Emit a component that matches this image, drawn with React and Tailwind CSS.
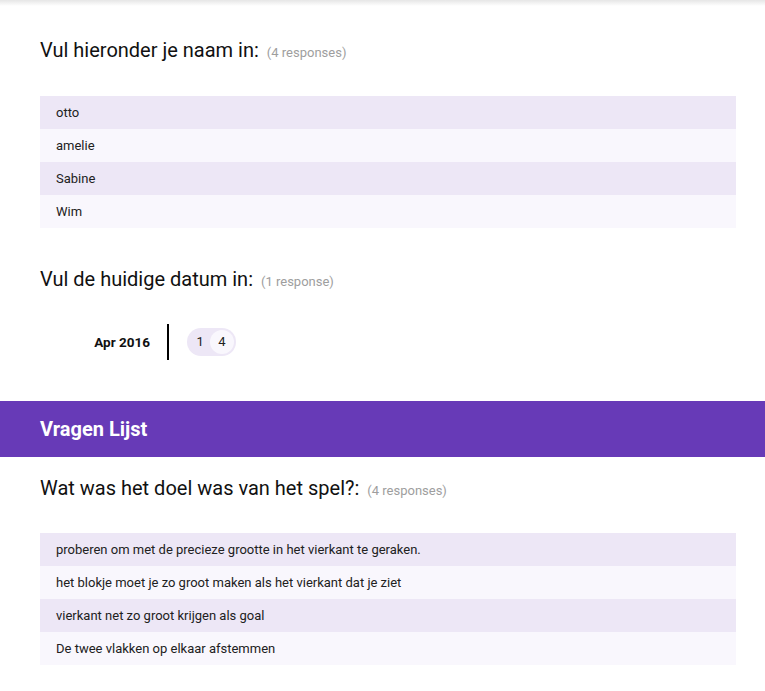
import React from "react";

const font = { fontFamily: "Roboto, 'Noto Sans', Arial, sans-serif" };

function Heading({ title, count, className = "" }) {
  return (
    <div className={"flex items-baseline gap-[8px] " + className}>
      <span className="text-[20px] leading-[28px] text-[#111111]">{title}</span>
      <span className="text-[13px] text-[#9e9e9e]">{count}</span>
    </div>
  );
}

function Rows({ items }) {
  return (
    <div className="flex flex-col">
      {items.map((t, i) => (
        <div
          key={i}
          className={
            "h-[33px] flex items-center pl-[16px] text-[13px] text-[#212121] " +
            (i % 2 === 0 ? "bg-[#ede7f6]" : "bg-[#f9f7fd]")
          }
        >
          {t}
        </div>
      ))}
    </div>
  );
}

export default function App() {
  return (
    <div className="w-[765px] h-[691px] bg-white overflow-hidden" style={font}>
      <div className="h-[6px] bg-gradient-to-b from-[#e6e6e6] to-white" />
      <div className="px-[40px] pr-[29px]">
        <Heading title="Vul hieronder je naam in:" count="(4 responses)" className="pt-[30px]" />
        <div className="mt-[32px]">
          <Rows items={["otto", "amelie", "Sabine", "Wim"]} />
        </div>
        <Heading title="Vul de huidige datum in:" count="(1 response)" className="mt-[37px]" />
        <div className="mt-[31px] flex items-center">
          <div className="w-[110px] text-right text-[13.5px] font-bold text-[#111111]">Apr 2016</div>
          <div className="ml-[17px] w-[1.5px] h-[36px] bg-black" />
          <div className="ml-[18px] h-[28px] rounded-full bg-[#ede7f6] flex items-center pl-[10px] pr-[2px] gap-[6px] text-[13px] text-[#212121]">
            <span>1</span>
            <span className="w-[24px] h-[24px] rounded-full bg-[#f9f7fd] flex items-center justify-center">4</span>
          </div>
        </div>
      </div>
      <div className="mt-[41px] h-[56px] bg-[#673ab7] flex items-center px-[40px]">
        <span className="text-white text-[20px] font-bold">Vragen Lijst</span>
      </div>
      <div className="px-[40px] pr-[29px]">
        <Heading title="Wat was het doel was van het spel?:" count="(4 responses)" className="pt-[17px]" />
        <div className="mt-[31px]">
          <Rows
            items={[
              "proberen om met de precieze grootte in het vierkant te geraken.",
              "het blokje moet je zo groot maken als het vierkant dat je ziet",
              "vierkant net zo groot krijgen als goal",
              "De twee vlakken op elkaar afstemmen",
            ]}
          />
        </div>
      </div>
    </div>
  );
}
